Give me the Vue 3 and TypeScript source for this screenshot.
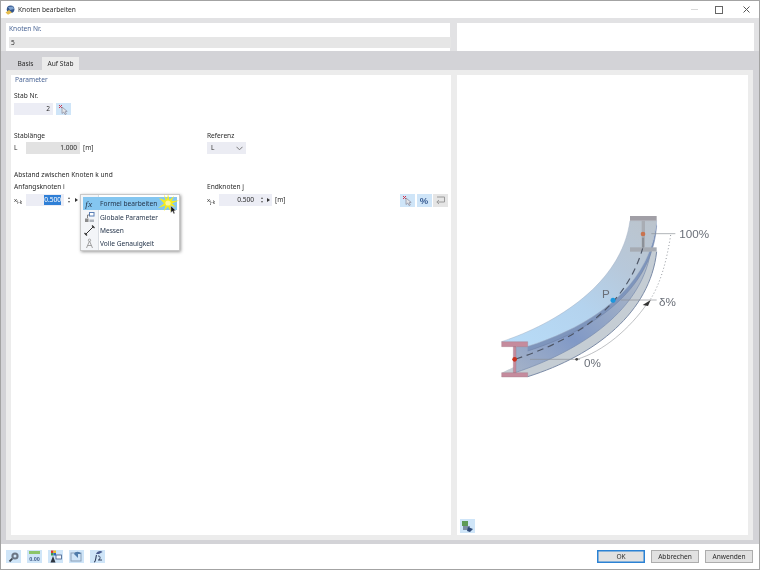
<script setup lang="ts">
interface MenuItem { label: string; active?: boolean }
const menu: MenuItem[] = [
  { label: 'Formel bearbeiten', active: true },
  { label: 'Globale Parameter' },
  { label: 'Messen' },
  { label: 'Volle Genauigkeit' },
]
</script>

<template>
  <div class="win">
    <header class="title">
      <svg class="logo" width="10" height="10" viewBox="0 0 10 10">
        <circle cx="5.6" cy="4.2" r="3.8" fill="#34568c" />
        <path d="M3 2 L8 1.5 L9 4 L5 5 Z" fill="#7fa3cf" />
        <path d="M0.5 7.5 L4 5 L7 7.5 L3 9.8 Z" fill="#e6bd4c" />
      </svg>
      <span class="title-text">Knoten bearbeiten</span>
      <div class="ctrls">
        <span class="min"></span>
        <span class="max"></span>
        <svg class="close" width="7" height="7" viewBox="0 0 7 7"><path d="M0.5 0.5 L6.5 6.5 M6.5 0.5 L0.5 6.5" stroke="#555" stroke-width="1" /></svg>
      </div>
    </header>

    <section class="top">
      <div class="node-card">
        <div class="group-label">Knoten Nr.</div>
        <div class="node-input">5</div>
      </div>
      <div class="side-card"></div>
    </section>

    <nav class="tabs">
      <span class="tab">Basis</span>
      <span class="tab on">Auf Stab</span>
    </nav>

    <main class="body">
      <div class="form">
        <div class="group-label">Parameter</div>
        <div class="lbl stab-lbl">Stab Nr.</div>
        <div class="row r2">
          <div class="field stab-field">2</div>
          <button class="ibtn stab-btn">
            <svg width="11" height="11" viewBox="0 0 11 11"><path d="M1 1 L4 4 M4 1 L1 4" stroke="#d0354a" stroke-width="1" /><path d="M4 3 L4 9.5 L5.8 8 L7 10.5 L8.3 10 L7.2 7.6 L9.2 7.4 Z" fill="#e4e6ea" stroke="#889" stroke-width=".7" /></svg>
          </button>
        </div>

        <div class="cols sec1">
          <div>
            <div class="lbl">Stablänge</div>
            <div class="row r1">
              <span class="sym">L</span>
              <div class="field len-field">1.000</div>
              <span class="unit">[m]</span>
            </div>
          </div>
          <div>
            <div class="lbl">Referenz</div>
            <div class="select r1">
              <span>L</span>
              <svg width="7" height="5" viewBox="0 0 7 5"><path d="M0.5 0.8 L3.5 3.8 L6.5 0.8" fill="none" stroke="#777" stroke-width="1" /></svg>
            </div>
          </div>
        </div>

        <div class="lbl sec2">Abstand zwischen Knoten k und</div>

        <div class="cols r2">
          <div>
            <div class="lbl">Anfangsknoten i</div>
            <div class="row r2">
              <span class="sym small">x<sub>i-k</sub></span>
              <div class="field dist-a"><span class="sel">0.500</span></div>
              <span class="spin"><i class="up"></i><i class="down"></i></span>
              <i class="arrow"></i>
            </div>
          </div>
          <div>
            <div class="lbl">Endknoten j</div>
            <div class="row r2">
              <span class="sym small">x<sub>j-k</sub></span>
              <div class="field dist-b">
                <span>0.500</span>
                <span class="spin inner"><i class="up"></i><i class="down"></i></span>
                <i class="arrow"></i>
              </div>
              <span class="unit">[m]</span>
              <div class="actions">
                <button class="ibtn">
                  <svg width="11" height="11" viewBox="0 0 11 11"><path d="M1 1 L4 4 M4 1 L1 4" stroke="#d0354a" stroke-width="1" /><path d="M4 3 L4 9.5 L5.8 8 L7 10.5 L8.3 10 L7.2 7.6 L9.2 7.4 Z" fill="#e4e6ea" stroke="#889" stroke-width=".7" /></svg>
                </button>
                <button class="ibtn pct">%</button>
                <button class="ibtn off">
                  <svg width="11" height="9" viewBox="0 0 11 9"><path d="M2 1 H9.5 V6 H2 M4 4 L1.8 6 L4 8" fill="none" stroke="#9a9a9a" stroke-width="1" /></svg>
                </button>
              </div>
            </div>
          </div>
        </div>

        <div class="menu">
          <div v-for="(m, i) in menu" :key="m.label" class="item" :class="{ active: m.active }">
            <span class="mi">
              <span v-if="i === 0" class="fx">fx</span>
              <svg v-else-if="i === 1" width="11" height="11" viewBox="0 0 11 11"><rect x="5.5" y="0.5" width="4.5" height="3.5" fill="#fff" stroke="#5b7fb5" stroke-width="1" /><path d="M5.5 3 H3.5 V6" fill="none" stroke="#666" stroke-width=".8" /><rect x="1" y="6.5" width="3.5" height="3.5" fill="#8b8b8b" /><rect x="5.5" y="7.5" width="4.5" height="2.5" fill="#aeb4bc" /></svg>
              <svg v-else-if="i === 2" width="11" height="11" viewBox="0 0 11 11"><path d="M1.5 9.5 L9.5 1.5" stroke="#333" stroke-width="1" /><path d="M0.5 8 L3 10.5 M8 0.5 L10.5 3" stroke="#333" stroke-width="1.2" /></svg>
              <svg v-else width="11" height="11" viewBox="0 0 11 11"><path d="M5.5 3 L2.5 10 M5.5 3 L8.5 10 M3.5 7.5 H7.5" fill="none" stroke="#999" stroke-width=".9" /><circle cx="5.5" cy="2.2" r="1.2" fill="none" stroke="#999" stroke-width=".8" /></svg>
            </span>
            <span>{{ m.label }}</span>
          </div>
          <svg class="burst" width="24" height="24" viewBox="0 0 24 24">
            <path d="M12 3 L13.5 9 L18 5 L15.5 10 L23 9.5 L16 12.5 L20 16 L14.5 14.5 L15 21 L12 15.5 L8 20 L9.5 14.5 L2 17 L8 12.5 L3 7 L9.5 9.5 L8 3.5 L11 8.5 Z" fill="#f5ed1e" />
            <circle cx="12" cy="12" r="2.6" fill="#faf6a0" />
          </svg>
          <svg class="cursor" width="7" height="10" viewBox="0 0 9 12"><path d="M1 0.5 V9.5 L3.2 7.6 L4.8 11 L6.4 10.3 L4.9 7.1 L7.8 7 Z" fill="#111" stroke="#fff" stroke-width=".6" /></svg>
        </div>
      </div>

      <div class="preview">
        <svg class="beam" width="230" height="180" viewBox="0 0 690 540">
          <defs>
            <linearGradient id="fl" x1="0" y1="1" x2="1" y2="0">
              <stop offset="0" stop-color="#b8dcf8" />
              <stop offset="0.42" stop-color="#b4d3ee" />
              <stop offset="0.7" stop-color="#b7c8da" />
              <stop offset="1" stop-color="#bcc4cc" />
            </linearGradient>
            <linearGradient id="wb" x1="0" y1="1" x2="1" y2="0">
              <stop offset="0" stop-color="#a4b2c8" />
              <stop offset="0.35" stop-color="#8199c6" />
              <stop offset="0.75" stop-color="#a3b1c6" />
              <stop offset="1" stop-color="#bcc5ce" />
            </linearGradient>
          </defs>
          <!-- lower flange -->
          <path d="M35 503 L113 515 C320 450 480 320 500 140 H420 C415 170 405 205 395 235 L300 380 Z" fill="#c5cdd4" />
          <path d="M113 515 C320 450 480 320 500 140" fill="none" stroke="#7a8aa6" stroke-width="3" />
          <path d="M420 140 C415 175 405 210 392 240" fill="none" stroke="#98a2ac" stroke-width="1.5" />
          <!-- web -->
          <path d="M78 425 V502 C250 445 450 330 482 140 L440 140 L300 300 Z" fill="url(#wb)" />
          <path d="M78 502 C250 445 450 330 482 140" fill="none" stroke="#7488ac" stroke-width="2" />
          <!-- upper flange underside -->
          <path d="M113 424 V438 C300 378 485 262 500 62 V47 C480 250 300 365 113 424 Z" fill="#7e95bc" />
          <path d="M113 438 C300 378 485 262 500 62" fill="none" stroke="#6a7da3" stroke-width="1.5" />
          <!-- upper flange -->
          <path d="M35 410 C200 355 395 235 420 47 H500 C480 250 300 365 113 424 Z" fill="url(#fl)" stroke="#a4b3c6" stroke-width="1.5" />
          <!-- top end section -->
          <path d="M420 33 H500 V47 H420 Z" fill="#a19fa6" />
          <path d="M455 47 H465 V127 H455 Z" fill="#a9adb4" />
          <path d="M420 127 H500 V140 H420 Z" fill="#a6abb3" />
          <path d="M459 98 V128" stroke="#6f747c" stroke-width="3" />
          <!-- bottom end section -->
          <path d="M35 410 H113 V425 H35 Z M35 503 H113 V516 H35 Z M70 425 H78 V503 H70 Z" fill="#c58b9d" stroke="#9c7483" stroke-width="1" />
          <!-- dashed center line -->
          <path d="M78 462 C220 415 400 330 458 130" fill="none" stroke="#4e5666" stroke-width="3.5" stroke-dasharray="20 14" />
          <!-- leaders -->
          <path d="M484 86 H556 M392 285 H500 M120 463 H270" stroke="#8b8f96" stroke-width="2" fill="none" />
          <path d="M542 90 C530 170 510 240 478 288" fill="none" stroke="#80848c" stroke-width="2.5" stroke-dasharray="3 7" />
          <path d="M260 463 C340 440 420 370 472 295" fill="none" stroke="#7e8289" stroke-width="1.5" />
          <path d="M458 300 L482 285 L474 303 Z" fill="#333" />
          <circle cx="260" cy="463" r="4" fill="#444" />
          <!-- points -->
          <circle cx="74" cy="463" r="7" fill="#c9301c" />
          <circle cx="459" cy="87" r="7" fill="#c9734f" />
          <circle cx="369" cy="286" r="7.5" fill="#1b97de" />
          <text x="336" y="278" class="fig">P</text>
          <text x="568" y="98" class="fig">100%</text>
          <text x="507" y="303" class="fig">δ%</text>
          <text x="282" y="487" class="fig">0%</text>
        </svg>
        <button class="ibtn view-btn">
          <svg width="13" height="13" viewBox="0 0 13 13"><rect x="1" y="1" width="6" height="5" fill="#5d9a56" /><rect x="2" y="6" width="7" height="4" fill="#7c8ea6" /><path d="M7 7 L12 9 L9 12 L6 11 Z" fill="#2f4a78" /></svg>
        </button>
      </div>
    </main>

    <footer class="foot">
      <div class="tools">
        <button class="ibtn">
          <svg width="12" height="12" viewBox="0 0 12 12"><circle cx="7" cy="5" r="3.6" fill="#6b7684" /><circle cx="7" cy="5" r="1.5" fill="#cfe5f8" /><path d="M4.3 7.6 L1.5 10.5" stroke="#3e4650" stroke-width="1.8" /></svg>
        </button>
        <button class="ibtn">
          <svg width="13" height="13" viewBox="0 0 13 13"><rect x="1" y="1" width="11" height="3" fill="#8cc56a" /><text x="6.5" y="10.5" class="ico-num">0.00</text></svg>
        </button>
        <button class="ibtn">
          <svg width="13" height="13" viewBox="0 0 13 13"><rect x="2" y="0.5" width="2.5" height="2.5" fill="#d8352f" /><rect x="4.5" y="0.5" width="2.5" height="2.5" fill="#e9c22c" /><rect x="2" y="3" width="2.5" height="2.5" fill="#3d9b48" /><rect x="4.5" y="3" width="2.5" height="2.5" fill="#2e67c4" /><path d="M4 6 L1.5 12.5 H6.5 Z" fill="#2d3540" /><rect x="7" y="5" width="5.5" height="4" fill="#f4f6f9" stroke="#3d5a88" stroke-width=".8" /></svg>
        </button>
        <button class="ibtn">
          <svg width="13" height="13" viewBox="0 0 13 13"><rect x="1" y="3" width="10" height="8" fill="none" stroke="#8a9fb8" stroke-width="1" /><path d="M4 4 C5 1 10 1 11 4 L8 4 L8 8 L6 6 Z" fill="#4f7cab" /></svg>
        </button>
        <button class="ibtn">
          <svg width="13" height="13" viewBox="0 0 13 13"><path d="M3 12 C5 12 4.5 8 5.5 5" fill="none" stroke="#2f3e5c" stroke-width="1.1" /><path d="M7 10 L11 10 M7 6 C9 6 10 7 8 10" fill="none" stroke="#2f3e5c" stroke-width="1" /><path d="M5 4 C6 1 10 0 11.5 2 L8 4 Z" fill="#4a5d8f" /></svg>
        </button>
      </div>
      <div class="btns">
        <button class="btn ok">OK</button>
        <button class="btn">Abbrechen</button>
        <button class="btn">Anwenden</button>
      </div>
    </footer>
  </div>
</template>

<style>
html, body { margin: 0; padding: 0; background: #fff; }
</style>

<style scoped>
.win {
  width: 760px; height: 570px; box-sizing: border-box;
  border: 1px solid #a3a3a3;
  display: flex; flex-direction: column;
  font: 6.6px/10px "Noto Sans", sans-serif;
  color: #2a2a2a; background: #fff; overflow: hidden;
  filter: blur(.3px);
}
button { font: inherit; color: inherit; padding: 0; border: 0; }

.title { height: 17px; display: flex; align-items: center; padding-left: 4px; flex: none; }
.title-text { margin-left: 3px; color: #2a2a2a; }
.logo { flex: none; }
.ctrls { margin-left: auto; display: flex; align-items: center; }
.min { width: 7px; height: 1px; background: #d8d8d8; margin-right: 17px; }
.max { width: 6px; height: 6px; border: 1px solid #666; margin-right: 20px; }
.close { margin-right: 9px; }

.top { height: 33px; flex: none; box-sizing: border-box; padding: 5px 5px 0; gap: 7px; display: flex; background: #e2e2e4; }
.node-card { width: 444px; background: #fff; padding: 1px 1px 0 3px; box-sizing: border-box; }
.side-card { flex: 1; background: #fff; }
.group-label { color: #4a6595; height: 10px; }
.node-input { background: #e6e6e6; height: 11px; line-height: 12px; margin-top: 3px; padding-left: 2px; width: 440px; }

.tabs { height: 19px; flex: none; box-sizing: border-box; padding: 6px 0 0 8px; background: #d3d3d7; display: flex; }
.tab { height: 13px; line-height: 13px; text-align: center; width: 33px; }
.tab.on { width: 37px; background: #ececec; }

.body { flex: 1; min-height: 0; background: #d3d3d7; padding: 0 4px 4px 5px; display: flex; }
.form, .preview { background: #fff; }
.form { position: relative; width: 440px; margin: 5px 6px 5px 5px; padding-left: 3px; box-sizing: border-box; box-shadow: 0 0 0 5px #ececec; }
.preview { width: 291px; margin: 5px 0; box-shadow: 0 0 0 5px #ececec; display: flex; flex-direction: column; }
.form > .group-label { padding-left: 1px; }

.lbl { height: 10px; line-height: 10px; }
.stab-lbl { margin-top: 6px; }
.row { display: flex; align-items: center; height: 12px; }
.r1 { margin-top: 1px; }
.r2 { margin-top: 2px; }
.sec1 { margin-top: 16px; }
.sec2 { margin-top: 16px; }
.cols { display: grid; grid-template-columns: 193px 1fr; }

.field { height: 12px; line-height: 12px; text-align: right; box-sizing: border-box; background: #ecedf5; padding-right: 3px; }
.stab-field { width: 39px; }
.len-field { width: 54px; background: #e2e2e2; }
.unit { margin-left: 3px; }
.sym { width: 12px; flex: none; }
.sym.small { font-size: 6px; }
.sym sub { font-size: 4.5px; line-height: 0; }
.dist-a { width: 38px; }
.sel { background: #2f7fd6; color: #fff; display: inline-block; height: 10px; line-height: 10px; }
.dist-b { width: 53px; display: flex; align-items: center; justify-content: flex-end; padding-right: 2px; }
.spin { display: inline-flex; flex-direction: column; gap: 2px; align-items: center; margin-left: 2px; width: 5px; }
.spin.inner { margin-left: 5px; }
.spin i { display: block; width: 0; height: 0; border-left: 1.5px solid transparent; border-right: 1.5px solid transparent; }
.spin .up { border-bottom: 2px solid #555; }
.spin .down { border-top: 2px solid #555; }
.arrow { display: block; width: 0; height: 0; margin-left: 4px; border-top: 2px solid transparent; border-bottom: 2px solid transparent; border-left: 3px solid #333; }
.dist-b .arrow { margin-left: 3px; }

.select { width: 39px; height: 12px; box-sizing: border-box; padding: 0 3px 0 4px; background: #ebecf3; display: flex; align-items: center; justify-content: space-between; }
.actions { display: flex; gap: 1.5px; margin-left: auto; margin-right: 3px; }

.ibtn { width: 15px; height: 13px; background: #cfe5f8; display: flex; align-items: center; justify-content: center; flex: none; }
.stab-btn { margin-left: 3px; height: 12px; }
.pct { font: 700 9.5px/13px "Liberation Sans", sans-serif; color: #3b5f95; }
.off { background: #e5e5e5; }

.menu { position: absolute; left: 69px; top: 119px; width: 100px; height: 57px; box-sizing: border-box; padding: 3px 3px 0 2px; background: linear-gradient(to right, #f3f5f8 17px, #d9dde2 17px, #d9dde2 18px, #fff 18px); border: 1px solid #c8c8c8; box-shadow: 1px 1px 3px rgba(0,0,0,.4); }
.item { height: 13px; display: flex; align-items: center; color: #24344a; }
.item.active { background: #84c6f0; width: 94px; margin-top: -1px; margin-bottom: 1px; }
.mi { width: 12px; margin-right: 5px; display: flex; justify-content: center; flex: none; }
.fx { font: italic 400 9px/10px "Liberation Serif", serif; color: #24344a; letter-spacing: .5px; }
.burst { position: absolute; left: 75px; top: -4px; }
.cursor { position: absolute; left: 89px; top: 10px; }

.beam { margin: 130px 0 0 33px; flex: none; }
.fig { font: 35px "Liberation Sans", sans-serif; fill: #6a6f78; }
.ico-num { font: 700 5.5px "Liberation Sans", sans-serif; fill: #3d5a88; text-anchor: middle; }
.view-btn { margin: auto 0 2px 3px; height: 14px; }

.foot { height: 25px; flex: none; display: flex; justify-content: space-between; padding: 6px 6px 0 5px; box-sizing: border-box; }
.tools { display: flex; gap: 6px; }
.btns { display: flex; gap: 6px; }
.btn { width: 48px; height: 13px; line-height: 11px; background: #e1e1e1; border: 1px solid #adadad; box-sizing: border-box; }
.btn.ok { border: 1px solid #2b82d4; box-shadow: inset 0 0 0 .5px #2b82d4; }
</style>
